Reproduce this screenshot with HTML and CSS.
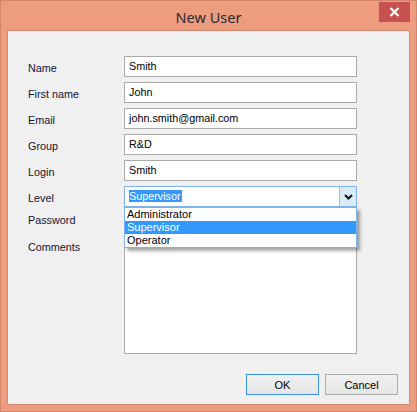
FILE: index.html
```html
<!DOCTYPE html>
<html>
<head>
<meta charset="utf-8">
<link rel="stylesheet" href="styles.css">
</head>
<body>
<div class="window">
  <div class="titlebar">
    <span class="title">New User</span>
    <div class="close"><svg width="11" height="10" viewBox="0 0 11 10"><path d="M1.5 1 L9.5 9 M9.5 1 L1.5 9" stroke="#fff" stroke-width="2.2"/></svg></div>
  </div>
  <div class="client">
    <div class="form">
      <label class="lbl">Name</label><div class="field">Smith</div>
      <label class="lbl">First name</label><div class="field">John</div>
      <label class="lbl">Email</label><div class="field">john.smith@gmail.com</div>
      <label class="lbl">Group</label><div class="field">R&amp;D</div>
      <label class="lbl">Login</label><div class="field">Smith</div>
      <label class="lbl">Level</label>
      <div class="combo">
        <div class="combo-text"><span class="sel">Supervisor</span></div>
        <div class="combo-btn"><svg width="9" height="6" viewBox="0 0 9 6"><path d="M1 1 L4.5 4.5 L8 1" fill="none" stroke="#111" stroke-width="2"/></svg></div>
        <div class="list">
          <div class="item">Administrator</div>
          <div class="item active">Supervisor</div>
          <div class="item">Operator</div>
        </div>
      </div>
      <label class="lbl lbl-pw">Password</label><div class="field"></div>
      <label class="lbl lbl-cm">Comments</label><div class="field area"></div>
    </div>
    <div class="buttons">
      <button class="btn default">OK</button>
      <button class="btn">Cancel</button>
    </div>
  </div>
</div>
</body>
</html>
```
FILE: styles.css
```css
html, body { margin: 0; padding: 0; background: #fff; }
.window {
  width: 417px; height: 412px; box-sizing: border-box;
  background: #ee9c80; border: 1px solid #d4866b;
  display: flex; flex-direction: column;
  font-family: "Liberation Sans", Arial, sans-serif;
}
.titlebar {
  height: 29px; position: relative;
  display: flex; justify-content: center; align-items: center;
}
.title {
  font-family: "Noto Sans", sans-serif; font-size: 14.5px; color: #2b2b2b;
  margin-top: 2px;
}
.close {
  position: absolute; right: 6px; top: 1px; width: 31px; height: 20px;
  background: #c75050; display: flex; align-items: center; justify-content: center;
}
.client {
  margin: 0 6px 6px; flex: 1; background: #f0f0f0; border: 1px solid #d3896e;
  display: flex; flex-direction: column;
}
.form {
  display: grid; grid-template-columns: 96px 233px; row-gap: 5px;
  padding: 25px 0 0 20px;
  font-size: 10.8px; color: #000;
}
.lbl { line-height: 24px; height: 21px; color: #141432; }
.lbl-pw { margin-top: -4px; }
.lbl-cm { margin-top: -3px; }
.field {
  height: 21px; box-sizing: border-box; background: #fff; border: 1px solid #ababab;
  padding: 0 4px; line-height: 19px; color: #000;
}
.field.area { height: 116px; }
.combo {
  position: relative; height: 21px; box-sizing: border-box; border: 1px solid #7eb4ea;
  background: #fff; display: flex;
}
.combo-text { flex: 1; padding: 3px 0 0 4px; }
.sel { background: #3399ff; color: #fff; display: inline-block; line-height: 12px; height: 12px; padding: 0 1px 0 0; }
.combo-btn {
  width: 16px; background: #d9ebf9; border-left: 1px solid #9ac4ee;
  display: flex; align-items: center; justify-content: center;
}
.list {
  position: absolute; left: -1px; right: -1px; top: 20px; z-index: 2;
  background: #fff; border: 1px solid #7eb4ea;
  box-shadow: 3px 3px 3px rgba(0,0,0,0.35);
}
.item { height: 13px; line-height: 13px; padding-left: 2px; color: #000; font-size: 11px; }
.item.active { background: #3399ff; color: #fff; }
.buttons {
  display: flex; justify-content: flex-end; gap: 6px;
  margin-top: 20px; padding-right: 11px;
}
.btn {
  width: 73px; height: 21px; box-sizing: border-box; margin: 0; padding: 0;
  border: 1px solid #adadad; background: linear-gradient(#f0f0f0, #e5e5e5);
  font-family: "Liberation Sans", Arial, sans-serif; font-size: 11px; color: #000;
}
.btn.default { border-color: #3c8ee8; }
```
